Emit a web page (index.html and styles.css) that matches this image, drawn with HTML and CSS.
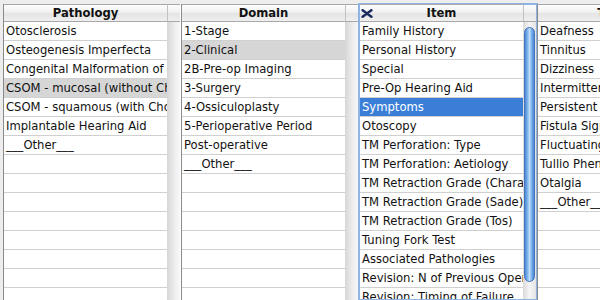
FILE: index.html
```html
<!DOCTYPE html>
<html>
<head>
    <title>Term Browser</title>
    <link rel="stylesheet" href="styles.css">
</head>
<body>
    <div class="browser">
        <div class="pane">
            <div class="list">
                <div class="head">Pathology</div>
                <ul class="rows">
                    <li>Otosclerosis</li>
                    <li>Osteogenesis Imperfecta</li>
                    <li>Congenital Malformation of Ear</li>
                    <li class="picked">CSOM - mucosal (without Cholesteatoma)</li>
                    <li>CSOM - squamous (with Cholesteatoma)</li>
                    <li>Implantable Hearing Aid</li>
                    <li>___Other___</li>
                </ul>
            </div>
            <div class="scroller">
                <div class="corner"></div>
                <div class="track"></div>
            </div>
        </div>

        <div class="pane">
            <div class="list">
                <div class="head">Domain</div>
                <ul class="rows">
                    <li>1-Stage</li>
                    <li class="picked">2-Clinical</li>
                    <li>2B-Pre-op Imaging</li>
                    <li>3-Surgery</li>
                    <li>4-Ossiculoplasty</li>
                    <li>5-Perioperative Period</li>
                    <li>Post-operative</li>
                    <li>___Other___</li>
                </ul>
            </div>
            <div class="scroller">
                <div class="corner"></div>
                <div class="track"></div>
            </div>
        </div>

        <div class="pane focused">
            <div class="list">
                <div class="head">
                    <svg class="clear-icon" viewBox="0 0 12 9" width="12" height="9">
                        <path d="M1.6 1.2 L10.4 7.8 M10.4 1.2 L1.6 7.8" stroke="#1b2b5e" stroke-width="2.5" stroke-linecap="round" fill="none"/>
                    </svg>
                    Item
                </div>
                <ul class="rows">
                    <li>Family History</li>
                    <li>Personal History</li>
                    <li>Special</li>
                    <li>Pre-Op Hearing Aid</li>
                    <li class="current">Symptoms</li>
                    <li>Otoscopy</li>
                    <li>TM Perforation: Type</li>
                    <li>TM Perforation: Aetiology</li>
                    <li>TM Retraction Grade (Charachon)</li>
                    <li>TM Retraction Grade (Sade)</li>
                    <li>TM Retraction Grade (Tos)</li>
                    <li>Tuning Fork Test</li>
                    <li>Associated Pathologies</li>
                    <li>Revision: N of Previous Operations</li>
                    <li>Revision: Timing of Failure</li>
                </ul>
            </div>
            <div class="scroller">
                <div class="corner"></div>
                <div class="track aqua">
                    <div class="thumb"></div>
                </div>
            </div>
        </div>

        <div class="pane">
            <div class="list">
                <div class="head">Tokens</div>
                <ul class="rows">
                    <li>Deafness</li>
                    <li>Tinnitus</li>
                    <li>Dizziness</li>
                    <li>Intermittent Otorrhoea</li>
                    <li>Persistent Otorrhoea</li>
                    <li>Fistula Sign</li>
                    <li>Fluctuating Hearing Loss</li>
                    <li>Tullio Phenomenon</li>
                    <li>Otalgia</li>
                    <li>___Other___</li>
                </ul>
            </div>
            <div class="scroller">
                <div class="corner"></div>
                <div class="track"></div>
            </div>
        </div>
    </div>
</body>
</html>
```

FILE: styles.css
```css
html, body {
    margin: 0;
    height: 100%;
}

body {
    background: #ededed;
    font-family: "DejaVu Sans", "Liberation Sans", sans-serif;
    font-size: 11.6px;
    color: #111;
    overflow: hidden;
}

.browser {
    display: flex;
    height: 100%;
    padding: 4px 0 0 3px;
    box-sizing: border-box;
}

.pane {
    flex: none;
    width: 177px;
    display: flex;
    border-left: 1px solid #8a8a8a;
    background: #fff;
}

.pane.focused {
    border-left-color: #5d88c6;
    outline: 2px solid #8fb3e4;
    outline-offset: -1px;
}

.list {
    width: 163px;
    display: flex;
    flex-direction: column;
    min-height: 0;
}

.head,
.corner {
    flex: none;
    height: 16px;
    border-top: 1px solid #a8a8a8;
    border-bottom: 1px solid #a8a8a8;
    background: linear-gradient(#fdfdfd, #f1f1f1 45%, #e4e4e4 55%, #efefef);
}

.head {
    position: relative;
    line-height: 16px;
    text-align: center;
    font-weight: bold;
    white-space: nowrap;
    overflow: hidden;
}

.clear-icon {
    position: absolute;
    left: 1px;
    top: 4px;
}

.rows {
    flex: 1;
    min-height: 0;
    margin: 0;
    padding: 0;
    list-style: none;
    overflow: hidden;
    background: repeating-linear-gradient(#fff 0 18px, #d0d0d0 18px 19px);
}

.rows li {
    height: 18px;
    line-height: 18px;
    padding: 0 2px;
    border-bottom: 1px solid #d0d0d0;
    background: #fff;
    white-space: nowrap;
    overflow: hidden;
    text-overflow: clip;
}

.rows li.picked {
    background: #d6d6d6;
}

.rows li.current {
    background: #3b7ed8;
    color: #fff;
}

.scroller {
    flex: none;
    width: 13px;
    display: flex;
    flex-direction: column;
}

.corner {
    border-left: 1px solid #c2c2c2;
}

.track {
    flex: 1;
    min-height: 0;
    background: linear-gradient(to right, #d6d6d6, #e2e2e2 30%, #f2f2f2 75%, #f7f7f7);
}

.track.aqua {
    padding-top: 5px;
    background: linear-gradient(to right, #d9d9d9, #f6f6f6 50%, #e4e4e4);
}

.thumb {
    height: 253px;
    margin: 0 1px;
    border: 1px solid #4574b8;
    border-radius: 6px;
    background: linear-gradient(to right, #4a86d6, #8fc0f0 35%, #c2e0fa 50%, #82b6ec 70%, #4a86d6);
}
```
